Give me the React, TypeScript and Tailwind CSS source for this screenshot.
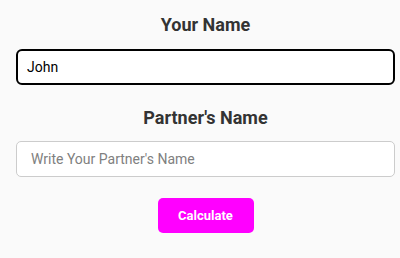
import { useState } from 'react';

export default function App() {
  const [name, setName] = useState('John');
  const [partner, setPartner] = useState('');

  return (
    <div className="min-h-[258px] w-[400px] bg-[#fafafa] font-['Roboto','Liberation_Sans',Arial,sans-serif]">
      <div className="pl-4 pr-[5px] pt-[14px] flex flex-col">
        <h2 className="text-center text-[18px] leading-[22px] font-bold text-[#333]">Your Name</h2>
        <input
          value={name}
          onChange={(e) => setName(e.target.value)}
          className="mt-[13px] h-[36px] w-full rounded-[6px] border-2 border-black bg-white px-[9px] text-[14px] text-black outline-none"
        />
        <h2 className="mt-[22px] text-center text-[18px] leading-[22px] font-bold text-[#333]">Partner's Name</h2>
        <input
          value={partner}
          onChange={(e) => setPartner(e.target.value)}
          placeholder="Write Your Partner's Name"
          className="mt-[12px] h-[36px] w-full rounded-[5px] border border-[#ccc] bg-white px-[14px] text-[14px] text-black outline-none placeholder:text-[#808080]"
        />
        <div className="mt-[21px] flex justify-center">
          <button className="h-[35px] w-[96px] rounded-[5px] bg-[#f0f] text-[13px] font-bold text-white">
            Calculate
          </button>
        </div>
      </div>
    </div>
  );
}
